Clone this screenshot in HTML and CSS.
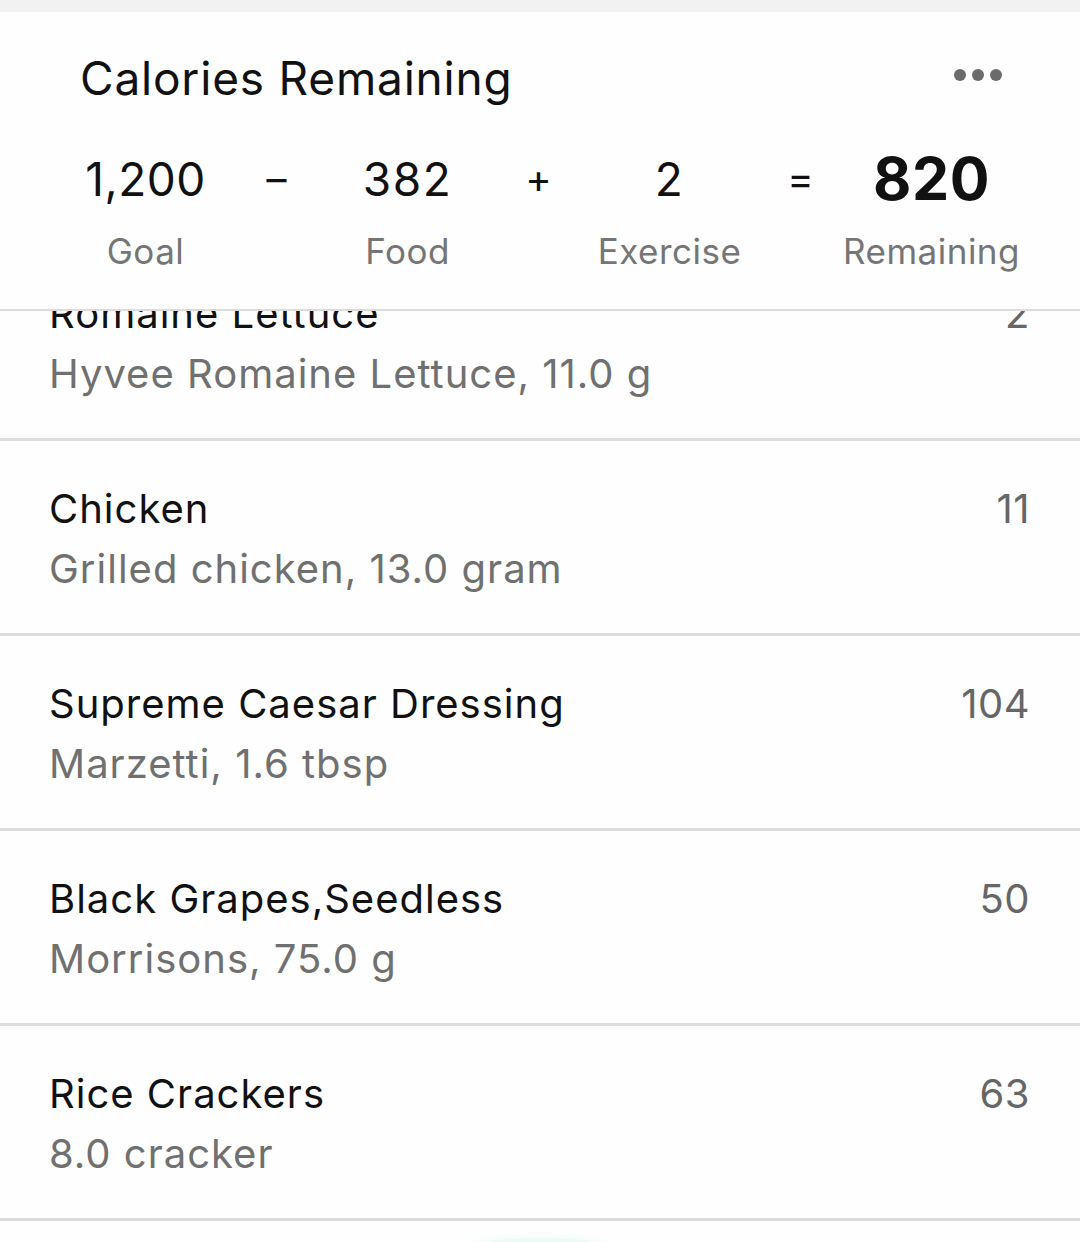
FILE: index.html
```html
<!DOCTYPE html>
<html>
<head>
<meta charset="utf-8">
<link rel="stylesheet" href="styles.css">
</head>
<body>
<div class="topstrip"></div>
<section class="card">
  <div class="card-head">
    <h1 class="title">Calories Remaining</h1>
    <div class="more"><span></span><span></span><span></span></div>
  </div>
  <div class="equation">
    <div class="cell"><div class="num goal">1,200</div><div class="lbl">Goal</div></div>
    <div class="cell op">–</div>
    <div class="cell"><div class="num">382</div><div class="lbl">Food</div></div>
    <div class="cell op">+</div>
    <div class="cell"><div class="num">2</div><div class="lbl">Exercise</div></div>
    <div class="cell op">=</div>
    <div class="cell"><div class="num big">820</div><div class="lbl">Remaining</div></div>
  </div>
</section>
<div class="list">
  <div class="row first">
    <div class="info"><div class="name">Romaine Lettuce</div><div class="sub">Hyvee Romaine Lettuce, 11.0 g</div></div>
    <div class="cal">2</div>
  </div>
  <div class="row">
    <div class="info"><div class="name">Chicken</div><div class="sub">Grilled chicken, 13.0 gram</div></div>
    <div class="cal">11</div>
  </div>
  <div class="row">
    <div class="info"><div class="name">Supreme Caesar Dressing</div><div class="sub">Marzetti, 1.6 tbsp</div></div>
    <div class="cal">104</div>
  </div>
  <div class="row">
    <div class="info"><div class="name">Black Grapes,Seedless</div><div class="sub">Morrisons, 75.0 g</div></div>
    <div class="cal">50</div>
  </div>
  <div class="row">
    <div class="info"><div class="name">Rice Crackers</div><div class="sub">8.0 cracker</div></div>
    <div class="cal">63</div>
  </div>
  <div class="fab-glow"></div>
</div>
</body>
</html>
```
FILE: styles.css
```css
* { box-sizing: border-box; }
html, body {
  margin: 0;
  padding: 0;
  background: #fefefe;
  font-family: Inter, "Noto Sans", "Liberation Sans", sans-serif;
  width: 1080px;
  height: 1242px;
  overflow: hidden;
}
.topstrip {
  height: 12px;
  background: #f2f2f2;
}
.card {
  background: #fefefe;
  height: 299px;
  border-bottom: 2px solid #dcdcdc;
}
.card-head {
  display: flex;
  align-items: center;
  justify-content: space-between;
  padding: 40px 78px 0 80px;
  height: 92px;
}
.title {
  margin: 0;
  font-weight: 400;
  font-size: 46px;
  line-height: 52px;
  color: #111;
  letter-spacing: 0.8px;
}
.more {
  display: flex;
  gap: 6px;
  margin-top: -6px;
}
.more span {
  width: 12px;
  height: 12px;
  border-radius: 50%;
  background: #6b6b6b;
}
.equation {
  display: grid;
  grid-template-columns: repeat(7, 131px);
  margin: 45px 0 0 80px;
}
.cell {
  display: flex;
  flex-direction: column;
  align-items: center;
}
.num {
  font-size: 46px;
  line-height: 60px;
  height: 60px;
  color: #111;
  letter-spacing: 1.5px;
}
.num.goal {
  letter-spacing: 0.5px;
}
.num.big {
  font-size: 59px;
  font-weight: 700;
  letter-spacing: 0.5px;
}
.lbl {
  margin-top: 21px;
  font-size: 35px;
  line-height: 42px;
  color: #757575;
  letter-spacing: 0.5px;
}
.op {
  font-size: 40px;
  line-height: 60px;
  height: 60px;
  color: #111;
}
.list {
  position: relative;
  height: 931px;
  overflow: hidden;
}
.row {
  display: flex;
  justify-content: space-between;
  align-items: flex-start;
  padding: 38px 50px 34px 49px;
  border-bottom: 3px solid #dcdcdc;
  height: 195px;
}
.row.first {
  margin-top: -65px;
}
.name {
  font-size: 40px;
  line-height: 60px;
  color: #111;
  letter-spacing: 1px;
}
.sub {
  font-size: 40px;
  line-height: 60px;
  color: #707070;
  letter-spacing: 1px;
}
.cal {
  font-size: 40px;
  line-height: 60px;
  color: #666;
  letter-spacing: 0.5px;
}
.fab-glow {
  position: absolute;
  left: 470px;
  bottom: -20px;
  width: 140px;
  height: 24px;
  border-radius: 50%;
  background: #eafaf4;
  box-shadow: 0 0 12px #effcf7;
}
```
